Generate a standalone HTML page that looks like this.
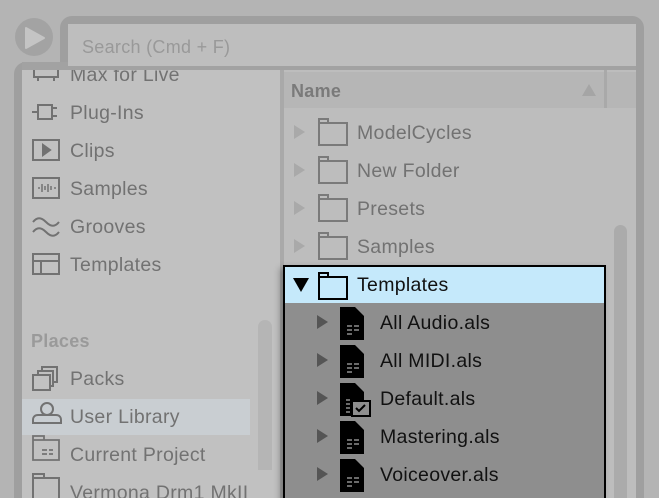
<!DOCTYPE html><html style="width:659px;height:498px;overflow:hidden"><head><style>
body{margin:0;width:659px;height:498px;overflow:hidden;background:#b4b4b4;font-family:"Liberation Sans",sans-serif;position:relative}
.a{position:absolute}
.t{position:absolute;font-size:19.5px;color:#727272;white-space:nowrap;line-height:22px;letter-spacing:0.3px}
</style></head><body>
<div class="a" style="left:60px;top:16px;width:584px;height:482px;background:#9f9f9f;border-radius:12px 12px 0 0"></div>
<div class="a" style="left:14px;top:62px;width:60px;height:436px;background:#9f9f9f;border-radius:12px 0 0 0"></div>
<div class="a" style="left:22px;top:70px;width:258px;height:428px;background:#c1c1c1"></div>
<div class="a" style="left:22px;top:399px;width:228px;height:36px;background:#c9ced2"></div>
<div class="a" style="left:258px;top:320px;width:14px;height:200px;background:#b5b5b5;border-radius:7px"></div>
<div class="a" style="left:280px;top:70px;width:4px;height:428px;background:#a9a9a9"></div>
<div class="t" style="left:70px;top:64px">Max for Live</div>
<div class="t" style="left:70px;top:102px">Plug-Ins</div>
<div class="t" style="left:70px;top:140px">Clips</div>
<div class="t" style="left:70px;top:178px">Samples</div>
<div class="t" style="left:70px;top:216px">Grooves</div>
<div class="t" style="left:70px;top:254px">Templates</div>
<div class="t" style="left:31px;top:330px;color:#9a9a9a;font-weight:bold;font-size:18px">Places</div>
<div class="t" style="left:70px;top:368px">Packs</div>
<div class="t" style="left:70px;top:406px">User Library</div>
<div class="t" style="left:70px;top:444px">Current Project</div>
<div class="t" style="left:70px;top:482px">Vermona Drm1 MkIII</div>
<div class="a" style="left:250px;top:470px;width:30px;height:28px;background:#c1c1c1"></div>
<svg class="a" style="left:30px;top:60px" width="34" height="440" fill="none" stroke="#727272" stroke-width="2">
<path d="M4 9 v8 h24 v-8 M8 17v4 M24 17v4"/>
<path d="M2 52h6 M8 45h14v14h-14z M22 48h5 M22 56h5"/>
<rect x="3" y="80" width="26" height="20"/><path d="M13 85l7 5-7 5z" fill="#727272"/>
<rect x="3" y="118" width="26" height="20"/><path d="M8 128h2M12 124v8M15 126v4M18 124v8M21 126v4M24 128h2" stroke-width="1.5"/>
<path d="M3 162c4-5 8-5 13 0s9 5 13 0M3 172c4-5 8-5 13 0s9 5 13 0"/>
<rect x="3" y="194" width="26" height="20"/><path d="M3 201h26M11 201v13"/>
<rect x="3" y="315" width="17" height="15"/><path d="M8 315v-4h15v15h-3M12 311v-4h15v15h-3"/>
<circle cx="17" cy="349" r="6"/><path d="M3 363v-3c0-3 2-5 5-5h18c3 0 5 2 5 5v3z"/>
<path d="M3 380h26v20h-26zM3 380v-4h11v4M12 390h5M19 390h4M12 394h5M19 394h4" stroke-width="1.8"/>
<path d="M3 418h26v22M3 418v-4h11v4M3 418v22"/>
</svg>
<div class="a" style="left:22px;top:62px;width:614px;height:8px;background:#a2a2a2"></div>
<div class="a" style="left:68px;top:24px;width:568px;height:42px;background:#bebebe"></div>
<div class="t" style="left:82px;top:36px;font-size:18px;color:#999">Search (Cmd + F)</div>
<div class="a" style="left:15px;top:18px;width:38px;height:38px;border-radius:50%;background:#a3a3a3"></div>
<svg class="a" style="left:24px;top:26px" width="24" height="24"><path d="M2 2 L20 12 L2 22Z" fill="#c4c4c4" stroke="#c4c4c4" stroke-linejoin="round" stroke-width="2"/></svg>
<div class="a" style="left:284px;top:70px;width:352px;height:428px;background:#bdbdbd"></div>
<div class="a" style="left:284px;top:72px;width:352px;height:36px;background:#b6b6b6"></div>
<div class="a" style="left:604px;top:70px;width:3px;height:38px;background:#a9a9a9"></div>
<div class="t" style="left:291px;top:80px;font-weight:bold;font-size:18px;color:#7a7a7a">Name</div>
<svg class="a" style="left:580px;top:82px" width="18" height="16"><path d="M2 14L9 2L16 14Z" fill="#a5a5a5"/></svg>
<div class="a" style="left:614px;top:225px;width:13px;height:290px;background:#ababab;border-radius:7px"></div>
<div class="t" style="left:357px;top:122px">ModelCycles</div>
<div class="t" style="left:357px;top:160px">New Folder</div>
<div class="t" style="left:357px;top:198px">Presets</div>
<div class="t" style="left:357px;top:236px">Samples</div>
<svg class="a" style="left:290px;top:110px" width="60" height="150" fill="none" stroke="#7a7a7a" stroke-width="2">
<path d="M4 15l11 7-11 7z M4 53l11 7-11 7z M4 91l11 7-11 7z M4 129l11 7-11 7z" fill="#a9a9a9" stroke="none"/>
<path d="M29 13h28v22h-28zM29 13v-4h9v4"/><path d="M29 51h28v22h-28zM29 51v-4h9v4"/>
<path d="M29 89h28v22h-28zM29 89v-4h9v4"/><path d="M29 127h28v22h-28zM29 127v-4h9v4"/>
</svg>
<div class="a" style="left:283px;top:265px;width:319px;height:240px;background:#8e8e8e;border:2px solid #000;box-shadow:-3px 3px 6px rgba(0,0,0,.3)"></div>
<div class="a" style="left:285px;top:267px;width:319px;height:36px;background:#c5e9fb"></div>
<div class="t" style="left:357px;top:274px;color:#111">Templates</div>
<div class="t" style="left:380px;top:312px;color:#111">All Audio.als</div>
<div class="t" style="left:380px;top:350px;color:#111">All MIDI.als</div>
<div class="t" style="left:380px;top:388px;color:#111">Default.als</div>
<div class="t" style="left:380px;top:426px;color:#111">Mastering.als</div>
<div class="t" style="left:380px;top:464px;color:#111">Voiceover.als</div>
<svg class="a" style="left:285px;top:267px" width="100" height="231">
<path d="M8 11h16l-8 14z" fill="#000"/>
<path d="M34 10h28v22h-28zM34 10v-4h9v4" fill="none" stroke="#000" stroke-width="2"/>
<g fill="#555"><path d="M32 48l11 7-11 7z"/><path d="M32 86l11 7-11 7z"/><path d="M32 124l11 7-11 7z"/><path d="M32 162l11 7-11 7z"/><path d="M32 200l11 7-11 7z"/></g>
<g fill="#000">
<path d="M55 40h15l9 9v24h-24z"/><path d="M55 78h15l9 9v24h-24z"/><path d="M55 116h15l9 9v24h-24z"/>
<path d="M55 154h15l9 9v24h-24z"/><path d="M55 192h15l9 9v24h-24z"/></g>
<g stroke="#8e8e8e" stroke-width="1.5">
<path d="M62 59h5M69 59h5M62 63h5M69 63h5M62 67h5"/><path d="M62 97h5M69 97h5M62 101h5M69 101h5M62 105h5"/>
<path d="M62 173h5M69 173h5M62 177h5M69 177h5M62 181h5"/><path d="M62 211h5M69 211h5M62 215h5M69 215h5M62 219h5"/>
<path d="M61 133h4M61 137h4M61 141h4M61 145h4"/></g>
<rect x="67" y="134" width="18" height="15" fill="#8e8e8e" stroke="#000" stroke-width="2"/>
<path d="M71 141l3 3 6-6" fill="none" stroke="#000" stroke-width="2"/>
</svg>
</body></html>
